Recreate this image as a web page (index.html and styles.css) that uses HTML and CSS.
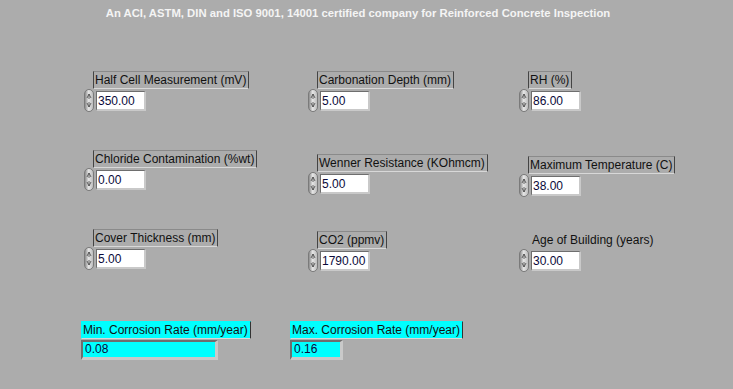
FILE: index.html
```html
<!DOCTYPE html>
<html lang="en">
<head>
    <meta charset="UTF-8">
    <title>Corrosion Rate</title>
    <link rel="stylesheet" href="styles.css">
</head>
<body>

    <div class="title">An ACI, ASTM, DIN and ISO 9001, 14001 certified company for Reinforced Concrete Inspection</div>

    <div class="panel">
        <div class="control">
            <div class="label">Half Cell Measurement (mV)</div>
            <div class="field"><span class="spin"><svg width="8" height="21" viewBox="0 0 8 21"><path d="M2 8 L4 4 L6 8 M4 4 V9 M2 13 L4 17 L6 13 M4 12 V17" fill="none" stroke="#444" stroke-width="0.8"/></svg></span><span class="num">350.00</span></div>
        </div>
        <div class="control">
            <div class="label">Carbonation Depth (mm)</div>
            <div class="field"><span class="spin"><svg width="8" height="21" viewBox="0 0 8 21"><path d="M2 8 L4 4 L6 8 M4 4 V9 M2 13 L4 17 L6 13 M4 12 V17" fill="none" stroke="#444" stroke-width="0.8"/></svg></span><span class="num">5.00</span></div>
        </div>
        <div class="control">
            <div class="label">RH (%)</div>
            <div class="field"><span class="spin"><svg width="8" height="21" viewBox="0 0 8 21"><path d="M2 8 L4 4 L6 8 M4 4 V9 M2 13 L4 17 L6 13 M4 12 V17" fill="none" stroke="#444" stroke-width="0.8"/></svg></span><span class="num">86.00</span></div>
        </div>

        <div class="control">
            <div class="label">Chloride Contamination (%wt)</div>
            <div class="field"><span class="spin"><svg width="8" height="21" viewBox="0 0 8 21"><path d="M2 8 L4 4 L6 8 M4 4 V9 M2 13 L4 17 L6 13 M4 12 V17" fill="none" stroke="#444" stroke-width="0.8"/></svg></span><span class="num">0.00</span></div>
        </div>
        <div class="control low">
            <div class="label">Wenner Resistance (KOhmcm)</div>
            <div class="field"><span class="spin"><svg width="8" height="21" viewBox="0 0 8 21"><path d="M2 8 L4 4 L6 8 M4 4 V9 M2 13 L4 17 L6 13 M4 12 V17" fill="none" stroke="#444" stroke-width="0.8"/></svg></span><span class="num">5.00</span></div>
        </div>
        <div class="control lower">
            <div class="label">Maximum Temperature (C)</div>
            <div class="field"><span class="spin"><svg width="8" height="21" viewBox="0 0 8 21"><path d="M2 8 L4 4 L6 8 M4 4 V9 M2 13 L4 17 L6 13 M4 12 V17" fill="none" stroke="#444" stroke-width="0.8"/></svg></span><span class="num">38.00</span></div>
        </div>

        <div class="control">
            <div class="label">Cover Thickness (mm)</div>
            <div class="field"><span class="spin"><svg width="8" height="21" viewBox="0 0 8 21"><path d="M2 8 L4 4 L6 8 M4 4 V9 M2 13 L4 17 L6 13 M4 12 V17" fill="none" stroke="#444" stroke-width="0.8"/></svg></span><span class="num">5.00</span></div>
        </div>
        <div class="control shift">
            <div class="label">CO2 (ppmv)</div>
            <div class="field"><span class="spin"><svg width="8" height="21" viewBox="0 0 8 21"><path d="M2 8 L4 4 L6 8 M4 4 V9 M2 13 L4 17 L6 13 M4 12 V17" fill="none" stroke="#444" stroke-width="0.8"/></svg></span><span class="num">1790.00</span></div>
        </div>
        <div class="control shift">
            <div class="label plain">Age of Building (years)</div>
            <div class="field"><span class="spin"><svg width="8" height="21" viewBox="0 0 8 21"><path d="M2 8 L4 4 L6 8 M4 4 V9 M2 13 L4 17 L6 13 M4 12 V17" fill="none" stroke="#444" stroke-width="0.8"/></svg></span><span class="num">30.00</span></div>
        </div>
    </div>

    <div class="outputs">
        <div class="indicator">
            <div class="label cyan">Min. Corrosion Rate (mm/year)</div>
            <div class="value wide">0.08</div>
        </div>
        <div class="indicator">
            <div class="label cyan">Max. Corrosion Rate (mm/year)</div>
            <div class="value">0.16</div>
        </div>
    </div>

</body>
</html>
```

FILE: styles.css
```css
body {
    margin: 0;
    background-color: #acacac;
    font-family: "Liberation Sans", Arial, sans-serif;
    width: 733px;
    height: 389px;
    overflow: hidden;
}

.title {
    color: #f4f4f4;
    font-size: 11.3px;
    font-weight: bold;
    text-align: center;
    padding: 7px 17px 0 0;
    height: 16px;
}

.panel {
    display: grid;
    grid-template-columns: 224px 211px 200px;
    grid-auto-rows: 79px;
    padding: 48px 0 0 84px;
}

.control {
    display: flex;
    flex-direction: column;
    align-items: flex-start;
}

.control.low { margin-top: 4px; }
.control.lower { margin-top: 6px; }
.control.shift { margin-top: 2px; }

.label {
    margin-left: 9px;
    padding: 0 2px 0 1px;
    height: 16px;
    line-height: 16px;
    font-size: 12px;
    color: #111;
    border: 1px solid;
    border-color: #8a8a8a #444 #d8d8d8 #444;
    background: #acacac;
    white-space: nowrap;
}

.label.plain {
    border-color: transparent;
    margin-left: 11px;
}

.field {
    display: flex;
    align-items: center;
}

.spin {
    width: 10px;
    height: 23px;
    border-radius: 5px;
    background: linear-gradient(to right, #8c8c8c, #e6e6e6 45%, #bdbdbd);
    border: 1px solid #7a7a7a;
    box-sizing: border-box;
    display: flex;
    align-items: center;
    justify-content: center;
    margin-right: 2px;
}

.spin svg {
    display: block;
}

.num {
    width: 50px;
    height: 20px;
    box-sizing: border-box;
    background: #fff;
    border-style: solid;
    border-width: 1px 2px 2px 1px;
    border-color: #6e6e6e #c9c9c9 #c9c9c9 #6e6e6e;
    font-size: 12px;
    line-height: 18px;
    padding-left: 1px;
    color: #0a0a3a;
}

.outputs {
    display: grid;
    grid-template-columns: 209px 200px;
    padding: 13px 0 0 81px;
}

.indicator {
    display: flex;
    flex-direction: column;
    align-items: flex-start;
    gap: 1px;
}

.label.cyan {
    margin-left: 0;
    background: #00ffff;
    border-color: #00ffff #333 #d8d8d8 #00ffff;
}

.value {
    width: 53px;
    height: 20px;
    box-sizing: border-box;
    background: #00ffff;
    border-style: solid;
    border-width: 2px 3px 3px 2px;
    border-color: #6e6e6e #c9c9c9 #c9c9c9 #6e6e6e;
    font-size: 12px;
    line-height: 15px;
    padding-left: 2px;
    color: #0a0a3a;
}

.value.wide {
    width: 137px;
}
```
